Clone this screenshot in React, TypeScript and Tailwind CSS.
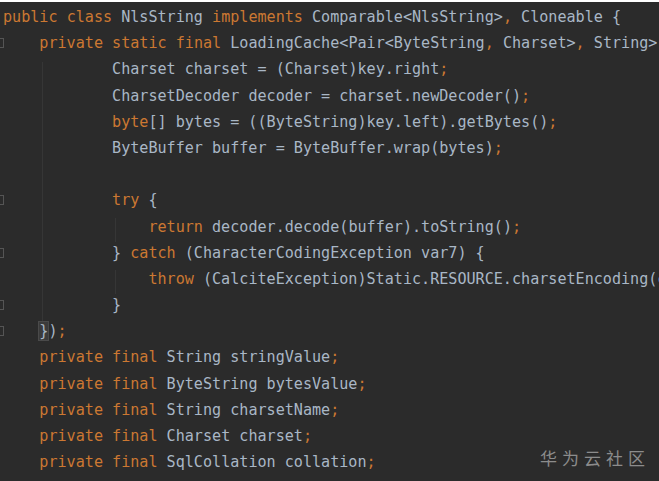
const KEYWORDS = new Set([
  "public",
  "class",
  "implements",
  "private",
  "static",
  "final",
  "byte",
  "try",
  "return",
  "catch",
  "throw",
]);

const lines: { text: string; fold?: boolean; match?: boolean }[] = [
  { text: "public class NlsString implements Comparable<NlsString>, Cloneable {" },
  {
    text: "    private static final LoadingCache<Pair<ByteString, Charset>, String> DECODE_MAP = CacheBuilder.newBuilder().softValues().build(CacheLoader.from((key) -> {",
    fold: true,
  },
  { text: "            Charset charset = (Charset)key.right;" },
  { text: "            CharsetDecoder decoder = charset.newDecoder();" },
  { text: "            byte[] bytes = ((ByteString)key.left).getBytes();" },
  { text: "            ByteBuffer buffer = ByteBuffer.wrap(bytes);" },
  { text: "" },
  { text: "            try {", fold: true },
  { text: "                return decoder.decode(buffer).toString();" },
  { text: "            } catch (CharacterCodingException var7) {", fold: true },
  { text: "                throw (CalciteException)Static.RESOURCE.charsetEncoding(charset.name()).ex();" },
  { text: "            }", fold: true },
  { text: "    });", fold: true, match: true },
  { text: "    private final String stringValue;" },
  { text: "    private final ByteString bytesValue;" },
  { text: "    private final String charsetName;" },
  { text: "    private final Charset charset;" },
  { text: "    private final SqlCollation collation;" },
];

function Tokens({ text, match }: { text: string; match?: boolean }) {
  const parts = text.split(/(\b[A-Za-z_]+\b|[;,])/);
  let braceDone = false;
  return (
    <>
      {parts.map((p, i) => {
        if (p === "") return null;
        if (KEYWORDS.has(p) || p === ";" || p === ",") {
          return (
            <span key={i} className="text-[#cc7832]">
              {p}
            </span>
          );
        }
        if (match && !braceDone && p.includes("}")) {
          braceDone = true;
          const at = p.indexOf("}");
          return (
            <span key={i}>
              {p.slice(0, at)}
              <span className="bg-[#3b3b3b] outline outline-1 outline-[#4a4a4a]">{"}"}</span>
              {p.slice(at + 1)}
            </span>
          );
        }
        return <span key={i}>{p}</span>;
      })}
    </>
  );
}

export default function App() {
  return (
    <div className="w-[659px] h-[481px] overflow-hidden bg-[#2b2b2b] flex flex-col">
      <div className="h-[2px] bg-white shrink-0" />
      <div
        className="relative pt-[2px] text-[#a9b7c6] text-[15.1px] leading-[26.2px]"
        style={{ fontFamily: '"DejaVu Sans Mono", "Liberation Mono", monospace' }}
      >
        {/* indent guides */}
        <div className="absolute left-[42px] top-[60px] h-[272px] w-px bg-[#363636]" />
        <div className="absolute left-[115px] top-[216px] h-[24px] w-px bg-[#363636]" />
        <div className="absolute left-[115px] top-[268px] h-[24px] w-px bg-[#363636]" />
        {lines.map((l, i) => (
          <div key={i} className="relative h-[26.2px] pl-[3px] whitespace-pre overflow-hidden">
            {l.fold && (
              <span className="absolute left-0 top-[8px] w-[4px] h-[10px] border border-l-0 border-[#555555]" />
            )}
            <Tokens text={l.text} match={l.match} />
          </div>
        ))}
        <div
          className="absolute right-[9px] bottom-[4px] text-[17px] tracking-[5px] text-[#8c8c8c]"
          style={{ fontFamily: '"Noto Sans CJK SC", sans-serif' }}
        >
          华为云社区
        </div>
      </div>
    </div>
  );
}
